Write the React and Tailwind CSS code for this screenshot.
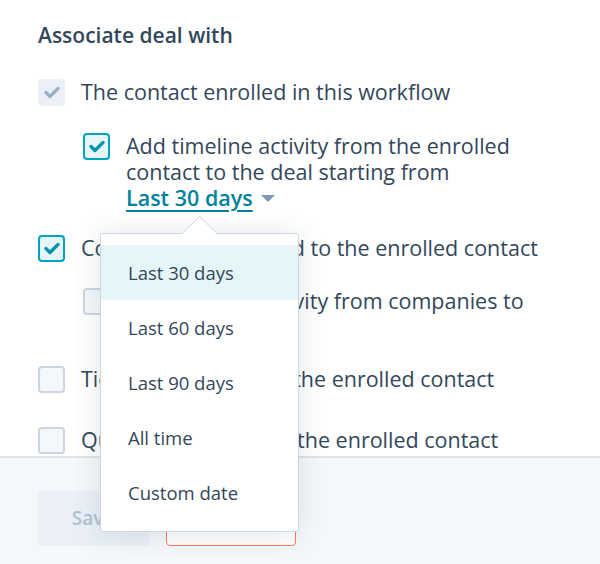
import { useState } from 'react';

const FONT = { fontFamily: '"Open Sans", "Noto Sans", sans-serif' };

function CheckIcon({ color }) {
  return (
    <svg width="16" height="13" viewBox="0 0 16 13" fill="none">
      <path d="M2 6.5l4 4L14 2.5" stroke={color} strokeWidth="3.2" strokeLinecap="round" strokeLinejoin="round" />
    </svg>
  );
}

function Box({ state }) {
  if (state === 'disabled') {
    return (
      <span className="flex h-[27px] w-[27px] shrink-0 items-center justify-center rounded-[4px] bg-[#eaf0f6]">
        <CheckIcon color="#99afc4" />
      </span>
    );
  }
  if (state === 'checked') {
    return (
      <span className="flex h-[27px] w-[27px] shrink-0 items-center justify-center rounded-[4px] border-2 border-[#00a4bd] bg-[#e5f5f8]">
        <CheckIcon color="#0091ae" />
      </span>
    );
  }
  return <span className="block h-[27px] w-[27px] shrink-0 rounded-[4px] border-2 border-[#cbd6e2] bg-[#f5f8fa]" />;
}

function Row({ state, className = '', children }) {
  return (
    <div className={`flex items-start gap-[16px] ${className}`}>
      <Box state={state} />
      <div className="whitespace-nowrap text-[21.5px] leading-[26px] text-[#33475b]">{children}</div>
    </div>
  );
}

const options = ['Last 30 days', 'Last 60 days', 'Last 90 days', 'All time', 'Custom date'];

export default function App() {
  const [selected, setSelected] = useState(0);

  return (
    <div className="relative h-[564px] w-[600px] overflow-hidden bg-white" style={FONT}>
      <div className="h-[456px] pl-[38px] pt-[23px]">
        <h2 className="text-[21px] font-semibold leading-[24px] text-[#33475b]">Associate deal with</h2>

        <Row state="disabled" className="mt-[32px]">The contact enrolled in this workflow</Row>

        <Row state="checked" className="ml-[45px] mt-[27px]">
          Add timeline activity from the enrolled
          <br />
          contact to the deal starting from
          <br />
          <span className="inline-flex items-center gap-[8px]">
            <span className="font-semibold text-[#00829a] underline decoration-[1.5px] underline-offset-[4px]">
              {options[selected]}
            </span>
            <svg width="14" height="7" viewBox="0 0 14 7">
              <path d="M0 0h14L7 7z" fill="#7c98b6" />
            </svg>
          </span>
        </Row>

        <Row state="checked" className="mt-[24px]">Companies associated to the enrolled contact</Row>

        <Row state="unchecked" className="ml-[45px] mt-[26px]">
          Add timeline activity from companies to
          <br />
          the deal
        </Row>

        <Row state="unchecked" className="mt-[26px]">Tickets associated to the enrolled contact</Row>

        <Row state="unchecked" className="mt-[34px]">Quotes associated to the enrolled contact</Row>
      </div>

      <div className="h-[108px] border-t-2 border-[#dfe3eb] bg-[#f5f8fa] pl-[37px] pt-[33px]">
        <div className="flex gap-[17px]">
          <button className="h-[55px] w-[112px] rounded-[4px] bg-[#eaf0f6] text-[19px] font-semibold text-[#b0c1d4]">
            Save
          </button>
          <button className="h-[55px] w-[130px] rounded-[4px] border border-[#ff7a59] bg-white text-[19px] font-semibold text-[#ff7a59]">
            Cancel
          </button>
        </div>
      </div>

      {/* dropdown popover */}
      <div className="absolute left-[100px] top-[216px] w-[199px]">
        <svg className="absolute left-[81px] top-0 z-10" width="37" height="19" viewBox="0 0 37 19">
          <path d="M0 18.5L18.5 0.5L37 18.5" fill="white" stroke="#cbd6e2" strokeWidth="1" />
          <rect x="1" y="18" width="35" height="2" fill="white" />
        </svg>
        <div className="mt-[17px] rounded-[3px] border border-[#cbd6e2] bg-white py-[11px] shadow-[0_2px_28px_rgba(45,62,80,0.14)]">
          {options.map((o, i) => (
            <div
              key={o}
              onClick={() => setSelected(i)}
              className={`flex h-[55px] items-center pl-[27px] text-[18.5px] text-[#33475b] ${i === selected ? 'bg-[#e5f5f8]' : ''}`}
            >
              {o}
            </div>
          ))}
        </div>
      </div>
    </div>
  );
}
